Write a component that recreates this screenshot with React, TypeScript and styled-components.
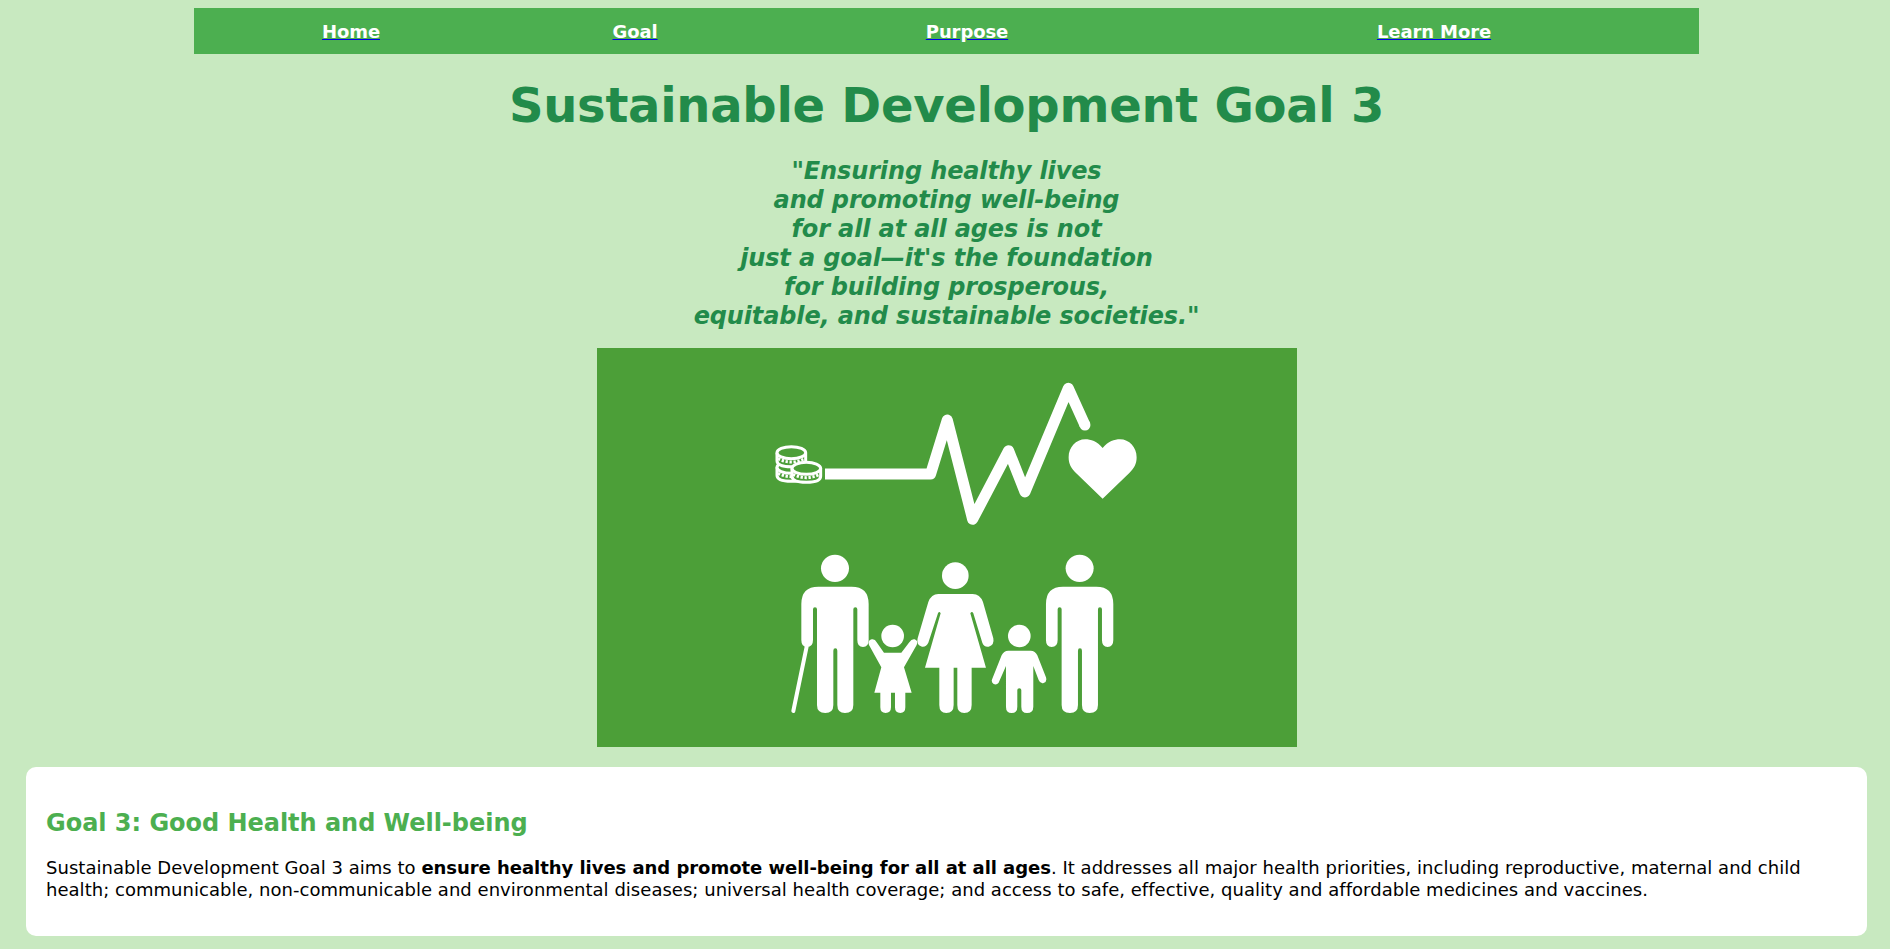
import { createGlobalStyle } from 'styled-components';
import styled from 'styled-components';

const GlobalStyle = createGlobalStyle`
  body {
    margin: 0;
    background: #c8e9c0;
    font-family: "DejaVu Sans", Verdana, sans-serif;
  }
`
const Page = styled.div`
  padding: 8px 23px 0 26px;
  display: flex;
  flex-direction: column;
  align-items: center;
`
const Nav = styled.nav`
  width: 1505px;
  height: 46px;
  background: #4caf50;
  display: grid;
  grid-template-columns: 314px 254px 410px 524px;
  align-items: center;
  justify-items: center;
`
const NavLink = styled.a`
  color: white;
  font-size: 18px;
  font-weight: 700;
  letter-spacing: -0.1px;
  text-decoration: underline;
  text-decoration-color: #0000ee;
`
const Title = styled.h1`
  margin: 22px 0 0;
  color: #228b4a;
  font-size: 48px;
  line-height: 58px;
  font-weight: 700;
  letter-spacing: -0.28px;
`
const Quote = styled.p`
  margin: 23px 0 0;
  color: #228b4a;
  font-size: 24px;
  line-height: 29px;
  font-weight: 700;
  font-style: italic;
  letter-spacing: -0.13px;
  text-align: center;
`
const Banner = styled.svg`
  display: block;
  width: 700px;
  height: 399px;
  margin-top: 17px;
  background: #4c9f38;
`
const Card = styled.section`
  align-self: stretch;
  margin-top: 20px;
  height: 169px;
  box-sizing: border-box;
  padding: 42px 20px 0;
  background: white;
  border-radius: 10px;
`
const CardTitle = styled.h2`
  margin: 0;
  color: #4caf50;
  font-size: 24px;
  line-height: 29px;
  font-weight: 700;
  letter-spacing: -0.03px;
`
const CardText = styled.p`
  margin: 19px 0 0;
  color: black;
  font-size: 18px;
  line-height: 22px;
  letter-spacing: 0.03px;

  strong {
    letter-spacing: -0.04px;
  }
`

const links = ['Home', 'Goal', 'Purpose', 'Learn More'];
const quote = [
  '"Ensuring healthy lives',
  'and promoting well-being',
  'for all at all ages is not',
  "just a goal\u2014it's the foundation",
  'for building prosperous,',
  'equitable, and sustainable societies."',
];

const manPath = 'M175 170H275Q326 170 326 222V330Q326 351 309 351Q292 351 292 330V238Q292 232 286 232Q280 232 280 238V525Q280 549 255 549Q232 549 232 525V362Q232 355 226 355Q220 355 220 362V525Q220 549 196 549Q171 549 171 525V238Q171 232 165 232Q159 232 159 238V330Q159 351 141 351Q124 351 124 330V222Q124 170 175 170Z';

function Coin({ x, y }: { x: number; y: number }) {
  return (
    <g fill="none" stroke="white">
      <path d={`M${x - 43} ${y}V${y + 24}Q${x - 43} ${y + 42} ${x} ${y + 42}Q${x + 43} ${y + 42} ${x + 43} ${y + 24}V${y}`} fill="#4c9f38" strokeWidth="9" />
      <path d={`M${x - 40} ${y + 18}Q${x} ${y + 38} ${x + 40} ${y + 18}`} strokeWidth="9" strokeDasharray="7 5" />
      <ellipse cx={x} cy={y} rx="43" ry="18" fill="#4c9f38" strokeWidth="9" />
    </g>
  );
}

function GoalArt() {
  return (
    <Banner viewBox="0 0 700 399">
      <g transform="translate(143 12) scale(0.3333)" fill="white">
        <Coin x={154} y={322} />
        <Coin x={154} y={278} />
        <Coin x={199} y={325} />
        <path
          d="M255 342H572L622 180L698 478L806 272L855 396L985 85L1035 195"
          fill="none"
          stroke="white"
          strokeWidth="33"
          strokeLinejoin="round"
          strokeLinecap="butt"
        />
        <circle cx="1035" cy="195" r="16.5" />
        <path d="M1088 264C1104 244 1124 238 1140 238C1168 238 1190 262 1190 292C1190 312 1182 326 1168 339L1088 416L1008 339C994 326 986 312 986 292C986 262 1008 238 1036 238C1052 238 1072 244 1088 264Z" />
      </g>
      <g transform="translate(163 182) scale(0.3333)" fill="white">
        <ellipse cx="225" cy="115" rx="42" ry="41" />
        <path d={manPath} />
        <line x1="140" y1="350" x2="100" y2="543" stroke="white" strokeWidth="12" strokeLinecap="round" />
        <ellipse cx="959" cy="115" rx="42" ry="41" />
        <path d={manPath} transform="translate(734 0)" />
        <circle cx="586" cy="137" r="40" />
        <path d="M535 192H638Q660 192 669 216L700 325Q704 345 686 350Q672 352 667 338L640 250Q636 242 631 250L678 413H635V525Q635 549 613 549Q592 549 592 525V413H581V525Q581 549 559 549Q538 549 538 525V413H495L542 250Q538 242 534 250L505 338Q498 352 486 350Q468 345 473 325L505 216Q514 192 535 192Z" />
        <circle cx="398" cy="318" r="34" />
        <path d="M327 345Q322 332 335 328Q345 326 350 337L372 368H424L448 337Q455 326 464 328Q476 333 470 345L432 412L455 488H436V532Q436 549 421 549Q405 549 405 532V488H393V532Q393 549 377 549Q361 549 361 532V488H343L364 412Z" />
        <circle cx="778" cy="318" r="34" />
        <path d="M745 362H812Q826 362 832 376L858 442Q862 456 851 459Q841 462 836 450L820 408V530Q820 549 801 549Q784 549 784 530V480Q784 475 778 475Q772 475 772 480V530Q772 549 755 549Q738 549 738 530V408L716 458Q710 466 701 462Q692 456 697 446L725 376Q731 362 745 362Z" />
      </g>
    </Banner>
  );
}

export default function App() {
  return (
    <Page>
      <GlobalStyle />
      <Nav>
        {links.map((label) => (
          <NavLink key={label} href="#">{label}</NavLink>
        ))}
      </Nav>
      <Title>Sustainable Development Goal 3</Title>
      <Quote>
        {quote.map((line) => (
          <span key={line}>{line}<br /></span>
        ))}
      </Quote>
      <GoalArt />
      <Card>
        <CardTitle>Goal 3: Good Health and Well-being</CardTitle>
        <CardText>
          Sustainable Development Goal 3 aims to <strong>ensure healthy lives and promote well-being for all at all ages</strong>. It addresses all major health priorities, including reproductive, maternal and child health; communicable, non-communicable and environmental diseases; universal health coverage; and access to safe, effective, quality and affordable medicines and vaccines.
        </CardText>
      </Card>
    </Page>
  );
}
